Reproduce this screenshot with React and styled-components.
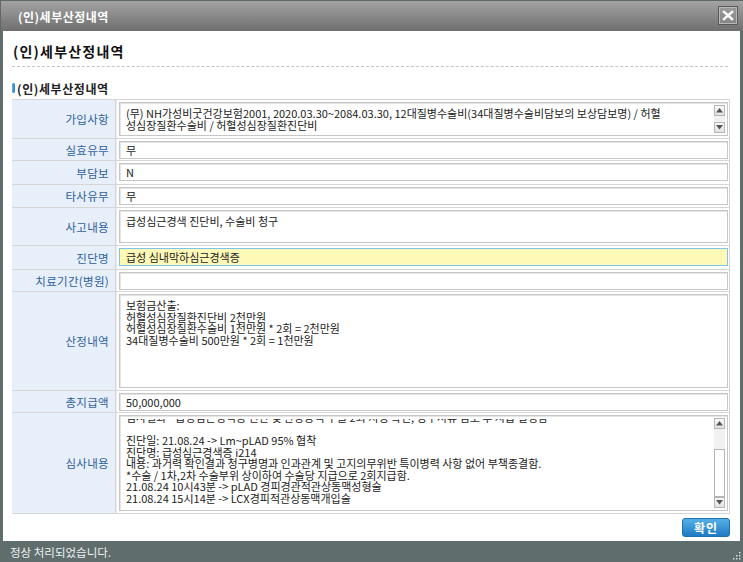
import React from 'react';
import styled, { createGlobalStyle } from 'styled-components';

const GlobalStyle = createGlobalStyle`
  html, body {
    margin: 0;
    padding: 0;
    background: #5f6d6d;
  }

  body {
    font-family: "Noto Sans CJK KR", "Noto Sans", sans-serif;
    font-size: 11px;
    color: #222;
  }
`;

const Window = styled.div`
  width: 743px;
  height: 562px;
  display: flex;
  flex-direction: column;
  background: #5f6d6d;
  box-sizing: border-box;
`;

const TitleBar = styled.div`
  height: 31px;
  flex: none;
  display: flex;
  align-items: center;
  justify-content: space-between;
  padding: 0 5px 0 17px;
  box-sizing: border-box;
  background: linear-gradient(#a3a3a3, #6f6f6f);
  border-top: 1px solid #5d6868;
  border-left: 1px solid #5d6868;
`;

const TitleText = styled.span`
  color: #fff;
  font-size: 12px;
  font-weight: bold;
  letter-spacing: 0.5px;
`;

const CloseButton = styled.div`
  width: 20px;
  height: 19px;
  box-sizing: border-box;
  display: flex;
  align-items: center;
  justify-content: center;
  background: linear-gradient(#9a9a9a, #858585);
  border: 1px solid #5a5a5a;
  box-shadow: inset 0 0 0 1px #b9b9b9;
  margin-top: -2px;
`;

const Body = styled.div`
  flex: 1;
  margin: 0 3px;
  background: #fff;
  padding: 10px 10px 0 9px;
  display: flex;
  flex-direction: column;
`;

const PageHeading = styled.h1`
  margin: 0;
  padding: 0 0 5px 1px;
  font-size: 14px;
  font-weight: bold;
  letter-spacing: 1.2px;
  line-height: 20px;
  color: #111;
  border-bottom: 1px dashed #c4c4c4;
  margin-right: 2px;
`;

const SectionTitle = styled.div`
  display: flex;
  align-items: center;
  gap: 2px;
  margin-top: 11px;
  height: 20px;
  font-size: 12px;
  font-weight: bold;
  letter-spacing: 0.6px;
  color: #222;
`;

const Bullet = styled.span`
  width: 3px;
  height: 10px;
  border-radius: 2px;
  background: linear-gradient(90deg, #5fb4ea, #2a7cc7);
`;

const FormTable = styled.div`
  margin-top: 1px;
  border-top: 1px solid #d6d6d6;
  border-right: 1px solid #d6d6d6;
`;

const Row = styled.div`
  display: flex;
  border-bottom: 1px solid #d6d6d6;
`;

const Label = styled.div`
  width: 104px;
  flex: none;
  box-sizing: border-box;
  background: #e7effb;
  color: #30619a;
  font-size: 11.5px;
  letter-spacing: 0.3px;
  display: flex;
  align-items: center;
  justify-content: flex-end;
  padding-right: 6px;
  border-right: 1px solid #d6d6d6;
`;

const Cell = styled.div`
  flex: 1;
  padding: 2px 1px ${(p) => p.$bottom ?? 2}px 2px;
  border-left: 1px solid #ececec;
  min-width: 0;
`;

const Field = styled.div`
  height: 18px;
  box-sizing: border-box;
  border: 1px solid ${(p) => (p.$highlight ? '#7cc4ec' : '#c6c6c6')};
  box-shadow: ${(p) => (p.$highlight ? 'none' : 'inset 1px 1px 0 #e4e4e4')};
  background: ${(p) => (p.$highlight ? '#fff9b8' : '#fff')};
  padding: 0 6px;
  line-height: 16px;
  white-space: nowrap;
  overflow: hidden;
`;

const TextArea = styled.div`
  height: ${(p) => p.$height}px;
  box-sizing: border-box;
  border: 1px solid #c6c6c6;
  box-shadow: inset 1px 1px 0 #e4e4e4;
  background: #fff;
  display: flex;
  overflow: hidden;
`;

const TextBody = styled.div`
  flex: 1;
  min-width: 0;
  display: flex;
  padding: ${(p) => p.$pad ?? 4}px 6px 0;
`;

const Viewport = styled.div`
  flex: 1;
  min-width: 0;
  overflow: hidden;
  line-height: 11.5px;
  white-space: pre;
`;

const Shift = styled.div`
  margin-top: ${(p) => -(p.$offset || 0)}px;
`;

const ScrollBar = styled.div`
  width: 11px;
  flex: none;
  margin: 2px 2px 2px 0;
  display: flex;
  flex-direction: column;
  background: #f1f1f1;
`;

const ArrowBtn = styled.div`
  height: 11px;
  flex: none;
  box-sizing: border-box;
  border: 1px solid #b5b5b5;
  background: linear-gradient(#fafafa, #e2e2e2);
  display: flex;
  align-items: center;
  justify-content: center;
`;

const Track = styled.div`
  flex: 1;
  display: flex;
  flex-direction: column;
`;

const TrackGap = styled.div`
  height: ${(p) => p.$size}px;
  flex: none;
`;

const Thumb = styled.div`
  flex: 1;
  box-sizing: border-box;
  border: 1px solid #b5b5b5;
  background: #fff;
`;

const Footer = styled.div`
  display: flex;
  justify-content: flex-end;
  padding-top: 4px;
`;

const ConfirmButton = styled.button`
  width: 48px;
  height: 19px;
  padding: 0;
  border: 1px solid #1d6fae;
  border-radius: 3px;
  background: linear-gradient(#56b0e6, #1e7bc4);
  color: #fff;
  font-family: inherit;
  font-size: 12px;
  font-weight: bold;
  letter-spacing: 1px;
  line-height: 16px;
  cursor: pointer;
`;

const StatusBar = styled.div`
  height: 21px;
  flex: none;
  display: flex;
  align-items: center;
  justify-content: space-between;
  padding: 0 2px 0 10px;
  color: #eef2f2;
  font-size: 11.5px;
`;

const Grip = styled.svg`
  align-self: flex-end;
  margin-bottom: 2px;
`;

const Arrow = ({ down }) => (
  <svg width="7" height="5" viewBox="0 0 7 5">
    <path d={down ? 'M0 0 L7 0 L3.5 4.5 Z' : 'M0 4.5 L7 4.5 L3.5 0 Z'} fill="#555" />
  </svg>
);

const Scroll = ({ thumbAt }) => (
  <ScrollBar>
    <ArrowBtn><Arrow /></ArrowBtn>
    <Track>
      {thumbAt !== undefined && (
        <>
          <TrackGap $size={thumbAt} />
          <Thumb />
        </>
      )}
    </Track>
    <ArrowBtn><Arrow down /></ArrowBtn>
  </ScrollBar>
);

const joinLines = [
  '(무) NH가성비굿건강보험2001, 2020.03.30~2084.03.30, 12대질병수술비(34대질병수술비담보의 보상담보명) / 허혈',
  '성심장질환수술비 / 허혈성심장질환진단비',
].join('\n');

const calcLines = [
  '보험금산출:',
  '허혈성심장질환진단비 2천만원',
  '허혈성심장질환수술비 1천만원 * 2회 = 2천만원',
  '34대질병수술비 500만원 * 2회 = 1천만원',
].join('\n');

const reviewLines = [
  '심사결과 - 급성심근경색증 진단 및 관상동맥 수술 2회 시행 확인, 청구서류 검토 후 지급 결정함',
  '',
  '진단일: 21.08.24 -> Lm~pLAD 95% 협착',
  '진단명: 급성심근경색증 i214',
  '내용: 과거력 확인결과 청구병명과 인과관계 및 고지의무위반 특이병력 사항 없어 부책종결함.',
  '*수술 / 1차,2차 수술부위 상이하여 수술당 지급으로 2회지급함.',
  '21.08.24 10시43분 -> pLAD 경피경관적관상동맥성형술',
  '21.08.24 15시14분 -> LCX경피적관상동맥개입술',
].join('\n');

// bottom: padding under the field, so each row keeps its own height
const rows = [
  { label: '가입사항', area: 34, text: joinLines, pad: 5, scroll: 'empty' },
  { label: '실효유무', text: '무', bottom: 1 },
  { label: '부담보', text: 'N', bottom: 3 },
  { label: '타사유무', text: '무' },
  { label: '사고내용', area: 33, text: '급성심근경색 진단비, 수술비 청구', pad: 5 },
  { label: '진단명', text: '급성 심내막하심근경색증', highlight: true, bottom: 3 },
  { label: '치료기간(병원)', text: '', bottom: 1 },
  { label: '산정내역', area: 94, text: calcLines, pad: 5 },
  { label: '총지급액', text: '50,000,000', bottom: 1 },
  { label: '심사내용', area: 96, text: reviewLines, pad: 3, offset: 7, scroll: 'thumb' },
];

export default function App() {
  return (
    <Window>
      <GlobalStyle />
      <TitleBar>
        <TitleText>(인)세부산정내역</TitleText>
        <CloseButton>
          <svg width="12" height="11" viewBox="0 0 12 11">
            <path d="M2 2 L10 9 M10 2 L2 9" stroke="#fff" strokeWidth="2.4" strokeLinecap="square" />
          </svg>
        </CloseButton>
      </TitleBar>
      <Body>
        <PageHeading>(인)세부산정내역</PageHeading>
        <SectionTitle>
          <Bullet />
          (인)세부산정내역
        </SectionTitle>
        <FormTable>
          {rows.map((row) => (
            <Row key={row.label}>
              <Label>{row.label}</Label>
              <Cell $bottom={row.bottom}>
                {row.area ? (
                  <TextArea $height={row.area}>
                    <TextBody $pad={row.pad}>
                      <Viewport>
                        <Shift $offset={row.offset}>{row.text}</Shift>
                      </Viewport>
                    </TextBody>
                    {row.scroll === 'empty' && <Scroll />}
                    {row.scroll === 'thumb' && <Scroll thumbAt={20} />}
                  </TextArea>
                ) : (
                  <Field $highlight={row.highlight}>{row.text}</Field>
                )}
              </Cell>
            </Row>
          ))}
        </FormTable>
        <Footer>
          <ConfirmButton>확인</ConfirmButton>
        </Footer>
      </Body>
      <StatusBar>
        <span>정상 처리되었습니다.</span>
        <Grip width="10" height="10" viewBox="0 0 10 10">
          {[[8, 2], [5, 5], [8, 5], [2, 8], [5, 8], [8, 8]].map(([x, y]) => (
            <rect key={`${x}-${y}`} x={x} y={y} width="1.5" height="1.5" fill="#d8dede" />
          ))}
        </Grip>
      </StatusBar>
    </Window>
  );
}
